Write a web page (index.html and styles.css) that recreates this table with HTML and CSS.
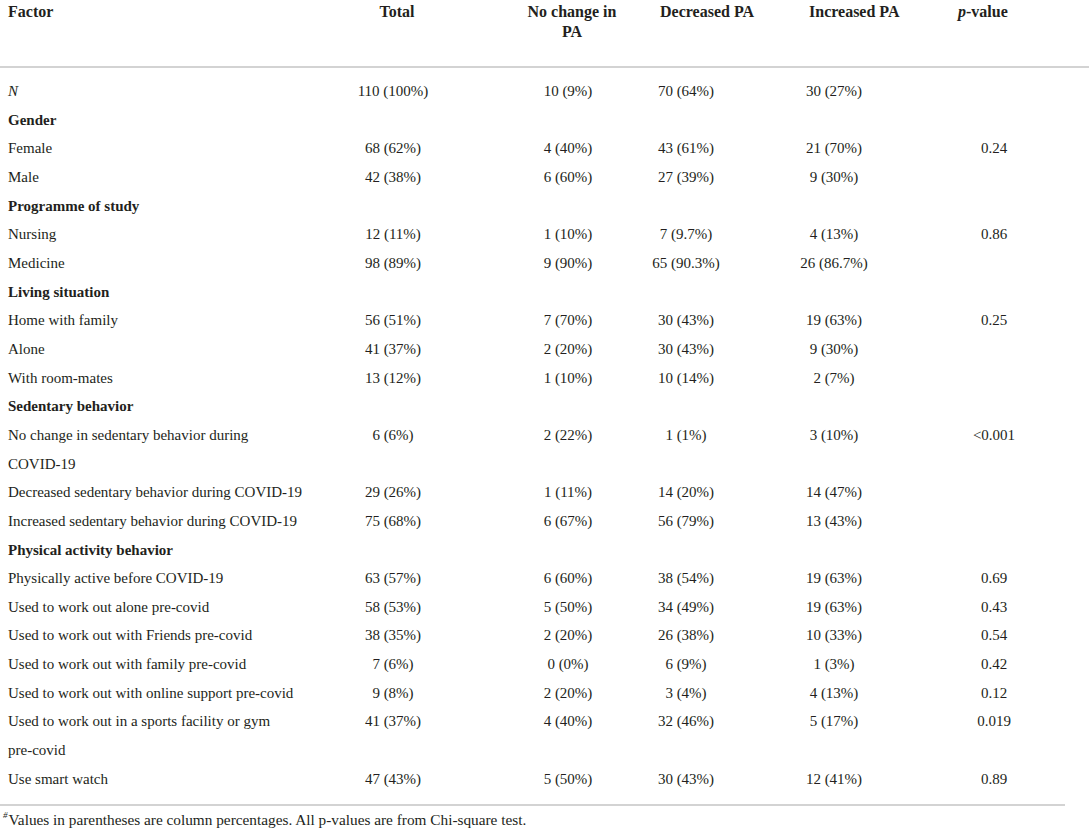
FILE: index.html
```html
<!DOCTYPE html>
<html>
<head>
<meta charset="utf-8">
<link rel="stylesheet" href="styles.css">
</head>
<body>
<div class="page">
<table class="data">
  <colgroup>
    <col class="c-factor">
    <col class="c-total">
    <col class="c-nochange">
    <col class="c-dec">
    <col class="c-inc">
    <col class="c-p">
    <col class="c-pad">
  </colgroup>
  <thead>
    <tr>
      <th class="h-factor">Factor</th>
      <th class="h-total">Total</th>
      <th class="h-nochange">No change in<br>PA</th>
      <th class="h-dec">Decreased PA</th>
      <th class="h-inc">Increased PA</th>
      <th class="h-p"><i>p</i>-value</th>
      <th></th>
    </tr>
  </thead>
  <tbody>
    <tr class="first"><td class="f"><i>N</i></td><td>110 (100%)</td><td>10 (9%)</td><td>70 (64%)</td><td>30 (27%)</td><td></td><td></td></tr>
    <tr><td class="f b">Gender</td><td></td><td></td><td></td><td></td><td></td><td></td></tr>
    <tr><td class="f">Female</td><td>68 (62%)</td><td>4 (40%)</td><td>43 (61%)</td><td>21 (70%)</td><td>0.24</td><td></td></tr>
    <tr><td class="f">Male</td><td>42 (38%)</td><td>6 (60%)</td><td>27 (39%)</td><td>9 (30%)</td><td></td><td></td></tr>
    <tr><td class="f b">Programme of study</td><td></td><td></td><td></td><td></td><td></td><td></td></tr>
    <tr><td class="f">Nursing</td><td>12 (11%)</td><td>1 (10%)</td><td>7 (9.7%)</td><td>4 (13%)</td><td>0.86</td><td></td></tr>
    <tr><td class="f">Medicine</td><td>98 (89%)</td><td>9 (90%)</td><td>65 (90.3%)</td><td>26 (86.7%)</td><td></td><td></td></tr>
    <tr><td class="f b">Living situation</td><td></td><td></td><td></td><td></td><td></td><td></td></tr>
    <tr><td class="f">Home with family</td><td>56 (51%)</td><td>7 (70%)</td><td>30 (43%)</td><td>19 (63%)</td><td>0.25</td><td></td></tr>
    <tr><td class="f">Alone</td><td>41 (37%)</td><td>2 (20%)</td><td>30 (43%)</td><td>9 (30%)</td><td></td><td></td></tr>
    <tr><td class="f">With room-mates</td><td>13 (12%)</td><td>1 (10%)</td><td>10 (14%)</td><td>2 (7%)</td><td></td><td></td></tr>
    <tr><td class="f b">Sedentary behavior</td><td></td><td></td><td></td><td></td><td></td><td></td></tr>
    <tr><td class="f">No change in sedentary behavior during<br>COVID-19</td><td>6 (6%)</td><td>2 (22%)</td><td>1 (1%)</td><td>3 (10%)</td><td>&lt;0.001</td><td></td></tr>
    <tr><td class="f">Decreased sedentary behavior during COVID-19</td><td>29 (26%)</td><td>1 (11%)</td><td>14 (20%)</td><td>14 (47%)</td><td></td><td></td></tr>
    <tr><td class="f">Increased sedentary behavior during COVID-19</td><td>75 (68%)</td><td>6 (67%)</td><td>56 (79%)</td><td>13 (43%)</td><td></td><td></td></tr>
    <tr><td class="f b">Physical activity behavior</td><td></td><td></td><td></td><td></td><td></td><td></td></tr>
    <tr><td class="f">Physically active before COVID-19</td><td>63 (57%)</td><td>6 (60%)</td><td>38 (54%)</td><td>19 (63%)</td><td>0.69</td><td></td></tr>
    <tr><td class="f">Used to work out alone pre-covid</td><td>58 (53%)</td><td>5 (50%)</td><td>34 (49%)</td><td>19 (63%)</td><td>0.43</td><td></td></tr>
    <tr><td class="f">Used to work out with Friends pre-covid</td><td>38 (35%)</td><td>2 (20%)</td><td>26 (38%)</td><td>10 (33%)</td><td>0.54</td><td></td></tr>
    <tr><td class="f">Used to work out with family pre-covid</td><td>7 (6%)</td><td>0 (0%)</td><td>6 (9%)</td><td>1 (3%)</td><td>0.42</td><td></td></tr>
    <tr><td class="f">Used to work out with online support pre-covid</td><td>9 (8%)</td><td>2 (20%)</td><td>3 (4%)</td><td>4 (13%)</td><td>0.12</td><td></td></tr>
    <tr><td class="f">Used to work out in a sports facility or gym<br>pre-covid</td><td>41 (37%)</td><td>4 (40%)</td><td>32 (46%)</td><td>5 (17%)</td><td>0.019</td><td></td></tr>
    <tr class="last"><td class="f">Use smart watch</td><td>47 (43%)</td><td>5 (50%)</td><td>30 (43%)</td><td>12 (41%)</td><td>0.89</td><td></td></tr>
  </tbody>
</table>
<div class="rule"></div>
<p class="note"><sup>#</sup>Values in parentheses are column percentages. All p-values are from Chi-square test.</p>
</div>
</body>
</html>
```

FILE: styles.css
```css
html, body {
  margin: 0;
  padding: 0;
  background: #ffffff;
}

body {
  font-family: "Liberation Serif", "Times New Roman", serif;
  color: #231f20;
}

.page {
  width: 1089px;
}

.data {
  width: 1089px;
  border-collapse: collapse;
  table-layout: fixed;
  font-size: 15px;
}

.c-factor { width: 300px; }
.c-total { width: 186px; }
.c-nochange { width: 164px; }
.c-dec { width: 72px; }
.c-inc { width: 224px; }
.c-p { width: 96px; }
.c-pad { width: 47px; }

.data th {
  font-size: 16px;
  font-weight: bold;
  line-height: 20px;
  vertical-align: top;
  padding: 2px 0 24px 0;
  border-bottom: 2px solid #d3d3d3;
  white-space: nowrap;
  overflow: visible;
}

.h-factor { text-align: left; padding-left: 8px !important; }
.h-total { text-align: center; padding-left: 8px !important; }
.h-nochange { text-align: center; padding-left: 8px !important; }
.h-dec { text-align: left; padding-left: 10px !important; }
.h-inc { text-align: left; padding-left: 87px !important; }
.h-p { text-align: left; padding-left: 12px !important; }

.data td {
  padding: 0;
  line-height: 28.65px;
  text-align: center;
  vertical-align: top;
  white-space: nowrap;
}

.data td.f {
  text-align: left;
  padding-left: 8px;
}

.data td.b {
  font-weight: bold;
}

.data tr.first td {
  padding-top: 9px;
}

.data tr.last td {
  padding-bottom: 11px;
}

.rule {
  width: 1065px;
  height: 2px;
  background: #d3d3d3;
}

.note {
  margin: 3px 0 0 3px;
  font-size: 15.3px;
  line-height: 22px;
}

.note sup {
  font-size: 9px;
  font-style: italic;
  vertical-align: top;
  line-height: 12px;
  margin-right: 1px;
}
```
